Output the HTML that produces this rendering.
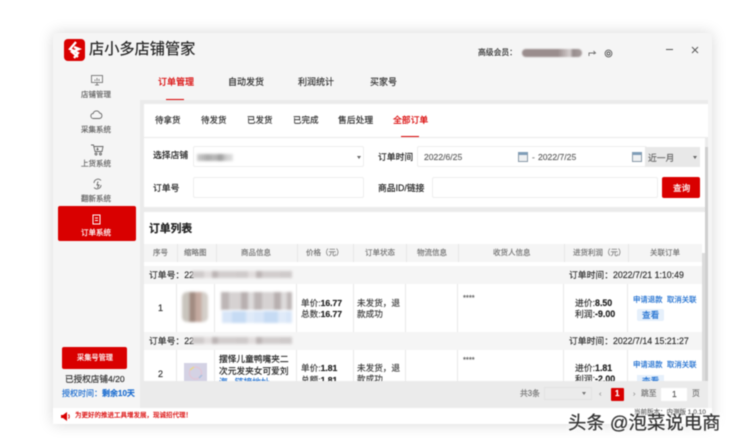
<!DOCTYPE html>
<html lang="zh"><head><meta charset="utf-8"><title>店小多店铺管家</title>
<style>
html,body{margin:0;padding:0;background:#fff}
body{width:734px;height:444px;overflow:hidden;position:relative;font-family:"Liberation Sans","Noto Sans CJK SC",sans-serif;color:#333}
#p{position:absolute;left:0;top:0;width:734px;height:444px;filter:blur(.45px)}
#p div,#p span.t,#p svg{position:absolute}
.t{position:absolute;white-space:nowrap;line-height:12px;height:12px;font-size:9px;-webkit-text-stroke:.18px currentColor}
.b{background:#f5f5f5}.w{background:#fff}
.s{font-size:7.5px;color:#666}
.h{font-size:7.5px;color:#777;text-align:center;top:247px}
.bl{color:#1f6fd0}
.bx{background:#fff;border:1px solid #eee;box-sizing:border-box;border-radius:2px}
.v{width:1px;background:#e8e8e8}
.m{filter:blur(1.4px)}
b{font-weight:700;color:#222}
</style></head><body>
<div id="p">
<!-- window -->
<div style="left:53px;top:33px;width:659px;height:391px;background:#f5f5f5;box-shadow:0 0 14px rgba(0,0,0,.16)"></div>
<div style="left:140px;top:100px;width:572px;height:308px;background:#ebebeb"></div>
<div class="b" style="left:708px;top:100px;width:4px;height:308px"></div>
<div class="w" style="left:53px;top:408px;width:659px;height:16px"></div>

<!-- logo -->
<div style="left:64px;top:39px;width:21px;height:22px;background:#d90000;border-radius:4px"></div>
<svg style="left:64px;top:39px" width="21" height="22" viewBox="0 0 21 22" fill="none" stroke="#fff" stroke-width="2.3"><path d="M12 3 6 10l8 4-4 5"/><path d="M10 8l5 2-7 3 6 5"/></svg>
<span class="t" style="left:89px;top:41px;font-size:15.2px;line-height:18px;height:18px;color:#222">店小多店铺管家</span>

<!-- header right -->
<span class="t" style="left:478px;top:47px;font-size:7.8px;color:#333">高级会员：</span>
<div class="m" style="left:522px;top:49px;width:60px;height:8px;border-radius:4px;filter:blur(.9px);background:linear-gradient(90deg,#9a8d8d 0,#9a8d8d 60%,#b8aeae 70%,#d5cfcf 80%,#968c8c 85%,#a89e9e 100%)"></div>
<svg style="left:588px;top:49px" width="9" height="8" viewBox="0 0 9 8" fill="none" stroke="#777" stroke-width="1"><path d="M1 7V4h6M5.500 2l2 2-2 1"/></svg>
<svg style="left:604px;top:49px" width="9" height="9" viewBox="0 0 9 9" fill="none" stroke="#555" stroke-width=".9"><circle cx="4.500" cy="4.500" r="3.400"/><circle cx="4.500" cy="4.500" r="1.500"/></svg>
<div style="left:666px;top:49px;width:7px;height:1px;background:#555"></div>
<svg style="left:691px;top:46px" width="8" height="8" viewBox="0 0 8 8" stroke="#555" stroke-width=".9"><path d="M1 1l6 6M7 1 1 7"/></svg>

<!-- sidebar -->
<svg style="left:91px;top:75px" width="12" height="11" viewBox="0 0 12 11" fill="none" stroke="#666" stroke-width=".8"><rect x=".5" y=".5" width="11" height="7"/><path d="M4 10h4M6 8v2M4 6V4.500M6 6V3M8 6V4"/></svg>
<span class="t s" style="left:81px;top:89px">店铺管理</span>
<svg style="left:90px;top:109px" width="13" height="11" viewBox="0 0 13 11" fill="none" stroke="#666" stroke-width=".9"><path d="M3.500 9.500a2.500 2.500 0 0 1-.3-5A3.400 3.400 0 0 1 9.600 4a2.800 2.800 0 0 1 0 5.500z"/></svg>
<span class="t s" style="left:81px;top:124px">采集系统</span>
<svg style="left:91px;top:144px" width="13" height="12" viewBox="0 0 13 12" fill="none" stroke="#666" stroke-width=".9"><path d="M0 1h2.500l1.500 6.500h7L12 2.500H3M6.500 3.500v2.500M5.500 5l1 1 1-1"/><circle cx="5" cy="10" r="1"/><circle cx="9.500" cy="10" r="1"/></svg>
<span class="t s" style="left:81px;top:158px">上货系统</span>
<svg style="left:92px;top:178px" width="11" height="12" viewBox="0 0 11 12" fill="none" stroke="#666" stroke-width=".9"><path d="M9 2.500A4 4 0 0 0 2 5M2 9.500A4 4 0 0 0 9 7M6 3.500 5 7h2l-1.500 3"/></svg>
<span class="t s" style="left:81px;top:193px">翻新系统</span>
<div style="left:58px;top:206px;width:78px;height:35px;background:#d90000;border-radius:2px"></div>
<svg style="left:92px;top:214px" width="10" height="11" viewBox="0 0 10 11" fill="none" stroke="#fff" stroke-width="1"><rect x="1" y="1" width="7" height="9"/><path d="M3 4h3M3 6.500h3"/></svg>
<span class="t s" style="left:81px;top:227px;color:#fff">订单系统</span>
<div style="left:62px;top:347px;width:65px;height:22px;background:#d90000;border-radius:2px"></div>
<span class="t" style="left:77px;top:352px;font-size:7.2px;color:#fff">采集号管理</span>
<span class="t" style="left:65px;top:373px;font-size:8.6px;color:#333">已授权店铺4/20</span>
<span class="t bl" style="left:62px;top:388px;font-size:8px">授权时间：<b style="color:#1f6fd0">剩余10天</b></span>

<!-- top tabs -->
<span class="t" style="left:158px;top:76px;color:#d90000">订单管理</span>
<div style="left:166px;top:99px;width:18px;height:1px;background:#d90000"></div>
<span class="t" style="left:228px;top:76px;color:#333">自动发货</span>
<span class="t" style="left:298px;top:76px;color:#333">利润统计</span>
<span class="t" style="left:370px;top:76px;color:#333">买家号</span>

<!-- sub tabs -->
<div class="w" style="left:144px;top:104px;width:564px;height:33px"></div>
<span class="t" style="left:155px;top:114px;font-size:8.5px;color:#333">待拿货</span>
<span class="t" style="left:201px;top:114px;font-size:8.5px;color:#333">待发货</span>
<span class="t" style="left:247px;top:114px;font-size:8.5px;color:#333">已发货</span>
<span class="t" style="left:293px;top:114px;font-size:8.5px;color:#333">已完成</span>
<span class="t" style="left:338px;top:114px;color:#333;font-size:8.8px">售后处理</span>
<span class="t" style="left:393px;top:114px;color:#d90000;font-size:8.8px">全部订单</span>
<div style="left:401px;top:136px;width:18px;height:1px;background:#d90000"></div>

<!-- filter -->
<div class="w" style="left:144px;top:138px;width:561px;height:69px"></div>
<span class="t" style="left:153px;top:149px;color:#222;font-size:8.8px">选择店铺</span>
<div class="bx" style="left:193px;top:146px;width:171px;height:21px"></div>
<div class="m" style="left:197px;top:154px;width:36px;height:7px;background:linear-gradient(90deg,#ccc,#aaa 30%,#bbb 50%,#999 65%,#ccc 80%,#e2e2e2)"></div>
<div style="left:357px;top:156px;border:2.5px solid transparent;border-top:3px solid #666;border-bottom:0"></div>
<span class="t" style="left:153px;top:182px;color:#222;font-size:8.8px">订单号</span>
<div class="bx" style="left:193px;top:177px;width:171px;height:21px"></div>

<span class="t" style="left:378px;top:151px;color:#222;font-size:8.8px">订单时间</span>
<div class="bx" style="left:417px;top:146px;width:230px;height:21px"></div>
<span class="t" style="left:424px;top:151px;color:#666;font-size:8.6px">2022/6/25</span>
<div style="left:518px;top:152px;width:10px;height:10px;background:#eef0f2;border:1px solid #8a9aa8;box-sizing:border-box;border-top:3px solid #7f9db8"></div>
<span class="t" style="left:532px;top:151px;color:#888;font-size:8.6px">-</span>
<span class="t" style="left:538px;top:151px;color:#666;font-size:8.6px">2022/7/25</span>
<div style="left:632px;top:152px;width:10px;height:10px;background:#eef0f2;border:1px solid #8a9aa8;box-sizing:border-box;border-top:3px solid #7f9db8"></div>
<div style="left:645px;top:147px;width:55px;height:20px;background:#e8e8e8"></div>
<span class="t" style="left:648px;top:152px;color:#666;font-size:8.8px">近一月</span>
<div style="left:693px;top:156px;border:2.500px solid transparent;border-top:3px solid #666;border-bottom:0"></div>
<span class="t" style="left:378px;top:182px;color:#222;font-size:8.8px">商品ID/链接</span>
<div class="bx" style="left:432px;top:177px;width:226px;height:21px"></div>
<div style="left:662px;top:177px;width:38px;height:21px;background:#d90000;border-radius:2px"></div>
<span class="t" style="left:673px;top:182px;color:#fff;font-size:8.6px">查询</span>

<!-- list -->
<div class="w" style="left:144px;top:212px;width:561px;height:169px"></div>
<span class="t" style="left:149px;top:223px;font-size:10.8px;font-weight:700;color:#222">订单列表</span>
<div class="b" style="left:144px;top:244px;width:558px;height:18px"></div>
<div class="v" style="left:177px;top:244px;height:18px"></div>
<div class="v" style="left:216px;top:244px;height:18px"></div>
<div class="v" style="left:297px;top:244px;height:18px"></div>
<div class="v" style="left:353px;top:244px;height:18px"></div>
<div class="v" style="left:406px;top:244px;height:18px"></div>
<div class="v" style="left:458px;top:244px;height:18px"></div>
<div class="v" style="left:564px;top:244px;height:18px"></div>
<div class="v" style="left:628px;top:244px;height:18px"></div>
<span class="t h" style="left:153px">序号</span>
<span class="t h" style="left:184px">缩略图</span>
<span class="t h" style="left:241px">商品信息</span>
<span class="t h" style="left:306px">价格（元）</span>
<span class="t h" style="left:365px">订单状态</span>
<span class="t h" style="left:417px">物流信息</span>
<span class="t h" style="left:493px">收货人信息</span>
<span class="t h" style="left:573px">进货利润（元）</span>
<span class="t h" style="left:650px">关联订单</span>

<!-- row1 -->
<div class="b" style="left:144px;top:266px;width:558px;height:18px"></div>
<span class="t" style="left:149px;top:269px;font-size:8.8px">订单号：22</span>
<div class="m" style="left:192px;top:271px;width:100px;height:7px;background:repeating-linear-gradient(90deg,#cfcaca 0 12px,#e2dede 12px 20px,#bcb5b5 20px 26px,#d2cdcd 26px 44px)"></div>
<span class="t" style="left:569px;top:269px;font-size:8.8px">订单时间：2022/7/21 1:10:49</span>
<div class="v" style="left:176px;top:284px;height:48px"></div>
<div class="v" style="left:214px;top:284px;height:48px"></div>
<div class="v" style="left:296px;top:284px;height:48px"></div>
<div class="v" style="left:353px;top:284px;height:48px"></div>
<div class="v" style="left:405px;top:284px;height:48px"></div>
<div class="v" style="left:457px;top:284px;height:48px"></div>
<div class="v" style="left:563px;top:284px;height:48px"></div>
<div class="v" style="left:627px;top:284px;height:48px"></div>
<span class="t" style="left:158px;top:302px">1</span>
<div class="m" style="left:182px;top:292px;width:26px;height:30px;border-radius:5px;background:linear-gradient(90deg,#c9c4bd 0,#c9c4bd 28%,#a08a80 30%,#a08a80 50%,#c4aaa0 52%,#c4aaa0 74%,#d4cec8 76%)"></div>
<div class="m" style="left:221px;top:292px;width:71px;height:18px;background:repeating-linear-gradient(90deg,#bdb6b6 0 8px,#d6d2d2 8px 20px,#b8b0b0 20px 27px,#dedbdb 27px 33px)"></div>
<div class="m" style="left:222px;top:311px;width:70px;height:12px;background:repeating-linear-gradient(90deg,#d8e6f8 0 10px,#c6dbf4 10px 24px,#e0ebf9 24px 32px)"></div>
<span class="t" style="left:301px;top:297px;color:#444;font-size:8.6px">单价:<b>16.77</b></span>
<span class="t" style="left:301px;top:308px;color:#444;font-size:8.6px">总数:<b>16.77</b></span>
<span class="t" style="left:357px;top:297px;color:#444;font-size:8.6px">未发货，退</span>
<span class="t" style="left:357px;top:308px;color:#444;font-size:8.6px">款成功</span>
<span class="t" style="left:463px;top:292px;font-size:7.5px;color:#555">****</span>
<span class="t" style="left:575px;top:297px;font-size:8.8px">进价:<b>8.50</b></span>
<span class="t" style="left:575px;top:308px;font-size:8.8px">利润:<b>-9.00</b></span>
<span class="t bl" style="left:633px;top:294px;font-size:7.4px">申请退款</span>
<span class="t bl" style="left:667px;top:294px;font-size:7.4px">取消关联</span>
<div style="left:637px;top:309px;width:27px;height:12px;background:#e6f0fb;border-radius:2px"></div>
<span class="t bl" style="left:642px;top:309px;font-size:8.6px">查看</span>

<!-- row2 -->
<div class="b" style="left:144px;top:332px;width:558px;height:18px"></div>
<span class="t" style="left:149px;top:335px;font-size:8.8px">订单号：22</span>
<div class="m" style="left:192px;top:337px;width:100px;height:7px;background:repeating-linear-gradient(90deg,#cfcaca 0 12px,#e2dede 12px 20px,#bcb5b5 20px 26px,#d2cdcd 26px 44px)"></div>
<span class="t" style="left:569px;top:335px;font-size:8.8px">订单时间：2022/7/14 15:21:27</span>
<div class="v" style="left:176px;top:350px;height:31px"></div>
<div class="v" style="left:214px;top:350px;height:31px"></div>
<div class="v" style="left:296px;top:350px;height:31px"></div>
<div class="v" style="left:353px;top:350px;height:31px"></div>
<div class="v" style="left:405px;top:350px;height:31px"></div>
<div class="v" style="left:457px;top:350px;height:31px"></div>
<div class="v" style="left:563px;top:350px;height:31px"></div>
<div class="v" style="left:627px;top:350px;height:31px"></div>
<span class="t" style="left:158px;top:368px">2</span>
<div style="left:184px;top:363px;width:23px;height:18px;background:#d4d2e4"></div>
<svg style="left:186px;top:364px" width="19" height="17" viewBox="0 0 19 17" fill="none" stroke-width="1.500"><circle cx="9.500" cy="9" r="6" stroke="#e0c8d8"/><path d="M4 6 8 3" stroke="#e8d890"/><path d="M13 14l3-3" stroke="#a8c0e0"/></svg>
<span class="t" style="left:219px;top:353px;font-size:8.7px;color:#222">摆怿儿童鸭嘴夹二</span>
<span class="t" style="left:219px;top:365px;font-size:8.7px;color:#222">次元发夹女可爱刘</span>
<span class="t bl" style="left:219px;top:376px;font-size:8.7px;height:5px;overflow:hidden">海...链接地址</span>
<span class="t" style="left:301px;top:362px;color:#444;font-size:8.6px">单价:<b>1.81</b></span>
<span class="t" style="left:301px;top:374px;color:#444;font-size:8.6px;height:7px;overflow:hidden">总额:<b>1.81</b></span>
<span class="t" style="left:357px;top:362px;color:#444;font-size:8.6px">未发货，退</span>
<span class="t" style="left:357px;top:373px;color:#444;font-size:8.6px;height:8px;overflow:hidden">款成功</span>
<span class="t" style="left:463px;top:354px;font-size:7.5px;color:#555">****</span>
<span class="t" style="left:575px;top:362px;font-size:8.8px">进价:<b>1.81</b></span>
<span class="t" style="left:575px;top:373px;font-size:8.8px;height:8px;overflow:hidden">利润:<b>-2.00</b></span>
<span class="t bl" style="left:633px;top:359px;font-size:7.4px">申请退款</span>
<span class="t bl" style="left:667px;top:359px;font-size:7.4px">取消关联</span>
<div style="left:637px;top:375px;width:27px;height:6px;background:#e6f0fb"></div>
<span class="t bl" style="left:642px;top:375px;font-size:8.6px;height:6px;overflow:hidden">查看</span>

<!-- scrollbars -->
<div style="left:702px;top:253px;width:3px;height:128px;background:#dcdcdc"></div>
<div style="left:705px;top:147px;width:3px;height:234px;background:#cfcfcf"></div>

<!-- footer -->
<span class="t" style="left:520px;top:388px;font-size:7.8px;color:#777">共3条</span>
<div style="left:544px;top:387px;width:48px;height:13px;border:1px solid #e2e2e2;box-sizing:border-box"></div>
<div style="left:582px;top:392px;border:2.500px solid transparent;border-top:3px solid #777;border-bottom:0"></div>
<span class="t" style="left:599px;top:388px;font-size:7.500px;color:#999">‹</span>
<div style="left:611px;top:388px;width:13px;height:13px;background:#d90000;border-radius:1px"></div>
<span class="t" style="left:615px;top:388px;font-size:8px;font-weight:700;color:#fff">1</span>
<span class="t" style="left:633px;top:388px;font-size:7.500px;color:#999">›</span>
<span class="t" style="left:641px;top:388px;font-size:7.800px;color:#777">跳至</span>
<div style="left:661px;top:388px;width:26px;height:13px;background:#fff"></div>
<span class="t" style="left:672px;top:388px;font-size:8.500px;color:#555">1</span>
<span class="t" style="left:692px;top:388px;font-size:7.800px;color:#777">页</span>

<!-- notice -->
<svg style="left:61px;top:412px" width="10" height="9" viewBox="0 0 10 9"><path d="M0 3h2l4-3v9L2 6H0z" fill="#d90000"/><path d="M7.500 2.500a3 3 0 0 1 0 4" fill="none" stroke="#d90000"/></svg>
<span class="t" style="left:75px;top:410px;font-size:6.500px;color:#d90000">为更好的推进工具增发展，现诚招代理！</span>
<span class="t" style="left:634px;top:407px;font-size:6.500px;color:#666">当前版本：内测版 1.0.10</span>

<!-- watermark -->
<span class="t" style="left:568px;top:413px;font-size:18.4px;line-height:20px;height:20px;color:#333;-webkit-text-stroke:.25px #333;text-shadow:0 0 2px #fff,0 0 2px #fff,0 0 3px #fff">头条 @泡菜说电商</span>
</div>
</body></html>
